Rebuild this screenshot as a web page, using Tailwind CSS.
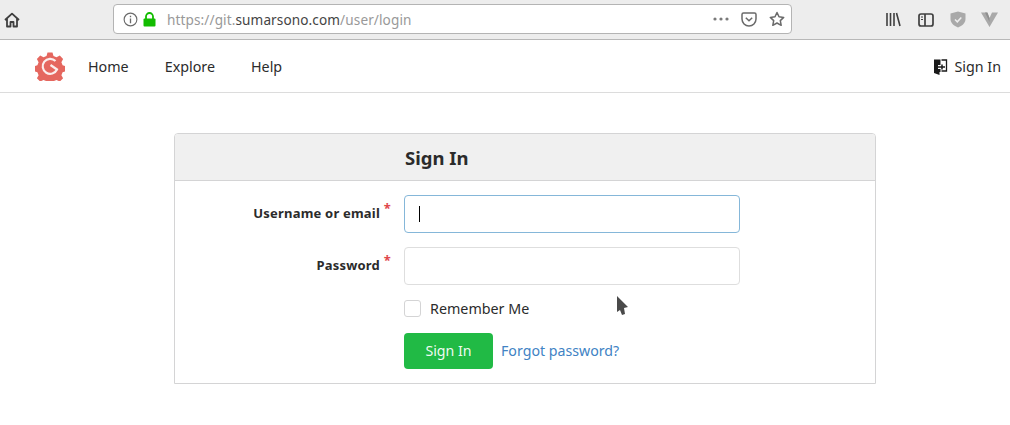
<!DOCTYPE html>
<html lang="en">
  <head>
    <meta charset="UTF-8" />
    <title>Sign In</title>
    <script src="https://cdn.jsdelivr.net/npm/@tailwindcss/browser@4"></script>
  </head>
  <body class="relative bg-white h-[425px] overflow-hidden font-['Noto_Sans',sans-serif] text-[#2b2b2b]">

    <!-- Browser toolbar -->
    <div class="h-10 bg-[#ededed] border-b border-[#b8b8b8] flex items-center">
      <svg class="ml-[4px] w-4 h-4" viewBox="0 0 16 16"><path d="M1 8 8 1.600 15 8M3 6.500V14.500H6.500V10H9.500V14.500H13V6.500" fill="none" stroke="#3f3f3f" stroke-width="1.800" stroke-linejoin="round" /></svg>
      <div class="ml-[93px] w-[679px] h-[30px] mt-[-1px] bg-white border border-[#b4b4b4] rounded-[4px] flex items-center">
        <svg class="ml-[9px] w-[15px] h-[15px]" viewBox="0 0 16 16"><circle cx="8" cy="8" r="6.800" fill="none" stroke="#6a6a6a" stroke-width="1.200" /><path d="M8 7v5M8 4v1.600" stroke="#6a6a6a" stroke-width="1.400" /></svg>
        <svg class="ml-[5px] w-[13px] h-[15px]" viewBox="0 0 13 15"><path d="M3 7V4.500a3.500 3.500 0 0 1 7 0V7" fill="none" stroke="#12bc00" stroke-width="1.800" /><rect x="0.500" y="6.500" width="12" height="8" rx="1" fill="#12bc00" /></svg>
        <span class="ml-[11px] pt-[2px] text-[13.600px] text-[#999] tracking-[0.1px] whitespace-nowrap">https://git.<span class="text-[#444]">sumarsono.com</span>/user/login</span>
        <div class="ml-auto flex items-center">
          <svg class="w-[16px] h-[4px]" viewBox="0 0 16 4"><circle cx="2" cy="2" r="1.600" fill="#7a7a7a" /><circle cx="8" cy="2" r="1.600" fill="#7a7a7a" /><circle cx="14" cy="2" r="1.600" fill="#7a7a7a" /></svg>
          <svg class="ml-[12px] w-4 h-[15px]" viewBox="0 0 16 15"><path d="M1 2.500A1.500 1.500 0 0 1 2.500 1h11A1.500 1.500 0 0 1 15 2.500V7a7 7 0 0 1-14 0Z" fill="none" stroke="#6a6a6a" stroke-width="1.500" /><path d="M4.800 5.800 8 8.800l3.200-3" fill="none" stroke="#6a6a6a" stroke-width="1.500" /></svg>
          <svg class="ml-[12px] mr-[6px] w-4 h-4" viewBox="0 0 16 16"><path d="M8 1.500 10 5.800l4.700.6-3.400 3.200.9 4.700L8 12l-4.200 2.300.9-4.700L1.300 6.400 6 5.800Z" fill="none" stroke="#6a6a6a" stroke-width="1.500" stroke-linejoin="round" /></svg>
        </div>
      </div>
      <svg class="ml-[94px] w-[15px] h-[15px]" viewBox="0 0 15 15"><path d="M1 1v13M4.500 1v13M8 1v13M10.500 1l3.500 13" stroke="#3f3f3f" stroke-width="1.600" fill="none" /></svg>
      <svg class="ml-[17px] w-4 h-[14px]" viewBox="0 0 16 14"><rect x="1" y="1" width="14" height="12" rx="2" fill="none" stroke="#3f3f3f" stroke-width="1.700" /><path d="M7 1v12" stroke="#3f3f3f" stroke-width="1.700" /><path d="M3 4h2M3 6.500h2" stroke="#3f3f3f" stroke-width="1.200" /></svg>
      <svg class="ml-[16px] w-4 h-[17px]" viewBox="0 0 16 17"><path d="M8 .5 15.500 2.500V8c0 4-3.500 7-7.500 8.500C4 15 .5 12 .5 8V2.500Z" fill="#a9a9a9" /><path d="M5 8.500 7.300 10.800 11.300 6.500" fill="none" stroke="#eee" stroke-width="1.500" /></svg>
      <svg class="ml-[15px] w-[17px] h-[15px]" viewBox="0 0 17 15"><path d="M0 .5H6L8.500 6 11 .5H17L8.500 15Z" fill="#a9a9a9" /><path d="M4 .5H6.500L8.500 6V10Z" fill="#8f8f8f" /></svg>
    </div>

    <!-- Nav -->
    <nav class="h-[53px] border-b border-[#dcdcdc] flex items-center text-[14.300px]">
      <svg class="ml-[35px] w-[30px] h-[30px]" viewBox="0 0 30 30">
        <path d="M12.500 1.500h5l1 3.500 3 1.300 3.300-1.700 3.300 3.500-1.700 3.100 1.200 3 3.400 1v5l-3.400 1-1.200 3 1.700 3-3.300 3.400-3.300-1.700-3 1.300-1 3.500h-5l-1-3.500-3-1.300-3.300 1.700-3.300-3.400 1.700-3-1.200-3-3.400-1v-5l3.400-1 1.200-3-1.700-3.100 3.300-3.500 3.300 1.700 3-1.300Z" fill="#e5675f" />
        <path d="M20.500 10A7.500 7.500 0 1 0 22 18.500L15.500 14" fill="none" stroke="#fbeeed" stroke-width="2.200" />
      </svg>
      <a class="ml-[23px] pt-[2px]" href="#">Home</a>
      <a class="ml-[36px] pt-[2px]" href="#">Explore</a>
      <a class="ml-[36px] pt-[2px]" href="#">Help</a>
      <a class="ml-auto mr-[9px] pt-[2px] flex items-center" href="#">
        <svg class="w-[15px] h-4 mr-[6px]" viewBox="0 0 15 16"><path d="M1 .5H7.500V6H5V10H7.500V13H6.500V16L1 14Z" fill="#1a1a1a" /><path d="M8.500 1H13.500V12H8.500" fill="none" stroke="#1a1a1a" stroke-width="1.300" /><path d="M5 8H12M9 5.500V10.500" stroke="#1a1a1a" stroke-width="1.500" /></svg>
        Sign In
      </a>
    </nav>

    <!-- Login card -->
    <main class="ml-[174px] mt-10 w-[702px] h-[251px] border border-[#d4d4d5] rounded-t-[4px]">
      <h2 class="h-[47px] bg-[#f0f0f0] border-b border-[#d4d4d5] pl-[230px] pt-[2px] flex items-center text-[18.500px] font-bold rounded-t-[3px]">Sign In</h2>
      <form class="pt-[14px]">
        <div class="flex items-center h-[38px]">
          <label class="w-[229px] pr-[24px] text-right text-[13px] font-bold tracking-[0.2px] relative whitespace-nowrap">Username or email<span class="absolute right-[13px] top-[-5px] text-[#e0474c] font-bold">*</span></label>
          <div class="w-[336px] h-[38px] border border-[#85b7d9] rounded-[4px] flex items-center pl-[14px]"><span class="w-px h-4 bg-black"></span></div>
        </div>
        <div class="flex items-center h-[38px] mt-[14px]">
          <label class="w-[229px] pr-[24px] text-right text-[13px] font-bold tracking-[0.2px] relative">Password<span class="absolute right-[13px] top-[-5px] text-[#e0474c] font-bold">*</span></label>
          <div class="w-[336px] h-[38px] border border-[#dedede] rounded-[4px]"></div>
        </div>
        <div class="flex items-center mt-[13px] pl-[229px] text-[14.300px]">
          <span class="w-[17px] h-[17px] border border-[#d4d4d5] rounded-[3px]"></span>
          <span class="ml-[9px]">Remember Me</span>
        </div>
        <div class="flex items-center mt-[14px] pl-[229px] text-[14.200px]">
          <button type="button" class="w-[89px] h-9 pb-px bg-[#21ba45] text-white/95 rounded-[4px]">Sign In</button>
          <a href="#" class="ml-2 pb-[2px] text-[#4183c4]">Forgot password?</a>
        </div>
      </form>
    </main>

    <!-- Mouse pointer -->
    <svg class="absolute left-[616px] top-[295px] w-[14px] h-[22px]" viewBox="0 0 14 22"><path d="M1 1 12 12 8 13 9 19 6 20 4 15 1 17Z" fill="#4a4a4a" /></svg>
  </body>
</html>
